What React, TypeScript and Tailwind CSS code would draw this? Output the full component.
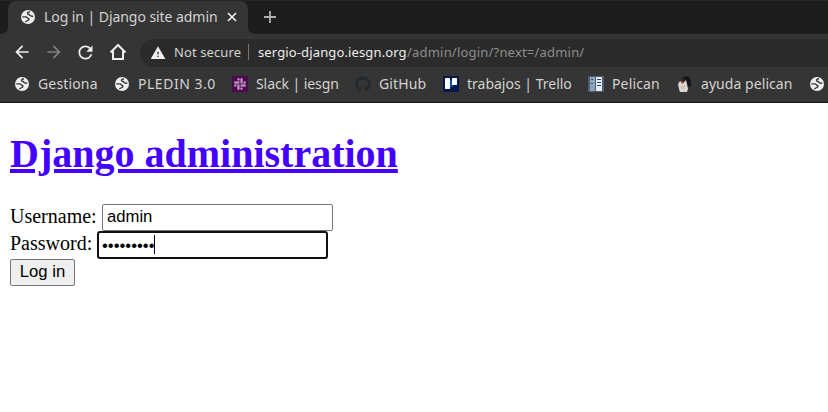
import React from "react";
import { SiSlack } from "react-icons/si";
import { FaGithub } from "react-icons/fa";
import { MdArrowBack, MdArrowForward, MdRefresh, MdWarning } from "react-icons/md";

function Globe() {
  return (
    <svg viewBox="0 0 14 14" className="block h-3.5 w-3.5 shrink-0">
      <circle cx="7" cy="7" r="7" fill="#eeeeec" />
      <path d="M1.300 6.900h3.200c1.900 0 1.700 1.300 3 1.700 1 .4.500 1.500-.5 1.800-.8.300-1.500.8-2.700 1.700" fill="none" stroke="#353535" strokeWidth="1.300" />
      <path d="M9 1.700C6.500 2 6 3.400 7 4.100c1 .6 1.500.3 2 1.300.5.8 1.700.9 3.300.7" fill="none" stroke="#353535" strokeWidth="1.400" />
    </svg>
  );
}

function Trello() {
  return (
    <svg viewBox="0 0 16 16" className="block h-4 w-4">
      <rect width="16" height="16" rx="1" fill="#05194d" />
      <path d="M7 4h3v7H7z" fill="#0b4f92" />
      <rect x="2" y="2" width="5" height="11" rx=".6" fill="#fff" />
      <rect x="9" y="2" width="5" height="7" rx=".6" fill="#fff" />
    </svg>
  );
}

function Book() {
  return (
    <svg viewBox="0 0 16 16" className="block h-4 w-4">
      <rect width="16" height="16" fill="#4c6075" />
      <rect x="2" y="1" width="5" height="14" fill="#8fa5b9" />
      <rect x="8" y="1" width="6" height="14" fill="#e4ebf2" />
      <path d="M3 3.500h2M3 7.500h2M9 3.500h4M9 6.500h4M9 9.500h4" stroke="#34495e" strokeWidth="1.200" />
    </svg>
  );
}

function Bird() {
  return (
    <svg viewBox="0 0 16 16" className="block h-4 w-4">
      <path d="M5 1.500L8 0l4 1 2 4v5l-3 1-4-5z" fill="#14151d" />
      <path d="M1 8l2-3 3 2 3-3 1 4 1 5-1 3H3l-1-3z" fill="#ddd7d1" />
      <path d="M4 2l3-1 1 4-2 2-2-1z" fill="#30272b" />
      <path d="M4 6l1.500-1 1 2-1.500 1z" fill="#e83c1e" />
      <path d="M4 10l1 2M8 9l-2 4" stroke="#b5a49b" strokeWidth=".8" />
    </svg>
  );
}

const bookmarks = [
  { label: "Gestiona", icon: <Globe />, cell: "w-[100px]", spacing: "tracking-[0.15px]" },
  { label: "PLEDIN 3.0", icon: <Globe />, cell: "w-[117px]", spacing: "tracking-[0.52px]" },
  { label: "Slack | iesgn", icon: <span className="flex h-4 w-4 items-center justify-center bg-[#4a0b4d]"><SiSlack size={12} color="#b98cba" /></span>, cell: "w-[123px]", spacing: "ml-px tracking-[-0.08px]" },
  { label: "GitHub", icon: <FaGithub size={16} color="#24292e" />, cell: "w-[88px]", spacing: "ml-px tracking-[0.1px]" },
  { label: "trabajos | Trello", icon: <Trello />, cell: "w-[145px]", spacing: "ml-px tracking-[0px]" },
  { label: "Pelican", icon: <Book />, cell: "w-[89px]", spacing: "ml-px tracking-[0.15px]" },
  { label: "ayuda pelican", icon: <Bird />, cell: "w-[133px]", spacing: "ml-px tracking-[0.06px]" },
  { label: "", icon: <Globe />, cell: "w-[30px]", spacing: "" },
];

export default function App() {
  return (
    <div className="h-[412px] w-[828px] overflow-hidden bg-white font-['Noto_Sans',sans-serif] text-[14px] text-[#d3d3d0]">
      <header className="h-[103px] border-b border-[#151515] bg-[#353535]">
        <div className="flex h-[34px] border-t border-[#282828] bg-[#353535]">
          <div className="w-2 rounded-br-[7px] bg-[#1d1d1d]" />
          <div className="flex w-60 bg-[#1d1d1d]">
            <div className="flex h-[33px] w-full items-center rounded-t-lg bg-[#353535] pb-px pl-[13px]">
              <Globe />
              <span className="ml-[9px] w-[183px] whitespace-pre pb-px leading-5 tracking-[-0.06px]">Log in | Django site admin</span>
              <svg viewBox="0 0 10 10" className="h-2.5 w-2.5 shrink-0" stroke="#eeeeec" strokeWidth="1.700"><path d="M1 1l8 8M9 1L1 9" /></svg>
            </div>
          </div>
          <div className="flex flex-1 items-center rounded-bl-[7px] bg-[#1d1d1d] pb-px pl-4">
            <svg viewBox="0 0 12 12" className="h-3 w-3" stroke="#b0b0ae" strokeWidth="1.800"><path d="M6 0v12M0 6h12" /></svg>
          </div>
        </div>
        <div className="flex h-9 items-center text-[13px]">
          <MdArrowBack size={20} color="#eeeeec" className="ml-3 shrink-0" />
          <MdArrowForward size={20} color="#7f7f7e" className="ml-3 shrink-0" />
          <MdRefresh size={21} color="#eeeeec" className="ml-[11px] shrink-0" />
          <svg viewBox="0 0 18 18" className="ml-[13px] h-[18px] w-[18px] shrink-0" fill="none" stroke="#eeeeec" strokeWidth="2">
            <path d="M1.500 9.500L9 2l7.500 7.500M4 8v8h10V8" />
          </svg>
          <div className="ml-[13px] mt-0.5 flex h-7 flex-1 items-center rounded-l-full bg-[#2b2b2b] pl-[10px]">
            <MdWarning size={16} color="#eeeeec" className="mb-px shrink-0" />
            <span className="ml-2 w-[74px] whitespace-nowrap tracking-[0.1px]">Not secure</span>
            <span className="mb-0.5 h-4 w-px bg-[#777775]" />
            <span className="ml-[9px] w-[149px] whitespace-nowrap tracking-[0.13px] text-[#eeeeec]">sergio-django.iesgn.org</span>
            <span className="whitespace-nowrap tracking-[0.2px] text-[#8e8e8c]">/admin/login/?next=/admin/</span>
          </div>
        </div>
        <nav className="flex h-[28px] items-center overflow-hidden pl-[15px]">
          {bookmarks.map((b, i) => (
            <div key={i} className={"flex shrink-0 items-center " + b.cell}>
              <span className="flex w-[23px] shrink-0 items-center">{b.icon}</span>
              <span className={"whitespace-nowrap leading-5 " + b.spacing}>{b.label}</span>
            </div>
          ))}
        </nav>
      </header>
      <main className="px-[10px] pt-[28px] font-['Liberation_Serif',serif] text-[20px] leading-[25px] text-black">
        <h1 className="text-[40px] font-bold leading-[46px]">
          <a className="text-[#4400ff] underline">Django administration</a>
        </h1>
        <form className="mt-[27px]">
          <div className="flex h-[27px]">
            <label className="w-[92px] whitespace-nowrap">Username:</label>
            <div className="h-[27px] w-[231px] rounded-[2px] border border-[#767676] px-1 font-['Liberation_Sans',sans-serif] text-[16.67px] leading-[23px]">admin</div>
          </div>
          <div className="flex h-7">
            <label className="w-[87px] whitespace-nowrap">Password:</label>
            <div className="flex h-7 w-[231px] items-center rounded-[3px] border-2 border-[#101010] px-[3px] font-['Liberation_Sans',sans-serif] text-[16.67px] leading-[23px]">
              <span>•••••••••</span>
              <span className="-mt-0.5 h-[19px] w-px bg-black" />
            </div>
          </div>
          <button type="button" className="block h-[27px] w-[65px] rounded-[2px] border border-[#767676] bg-[#efefef] pb-0.5 font-['Liberation_Sans',sans-serif] text-[16.67px] leading-[23px]">Log in</button>
        </form>
      </main>
    </div>
  );
}
